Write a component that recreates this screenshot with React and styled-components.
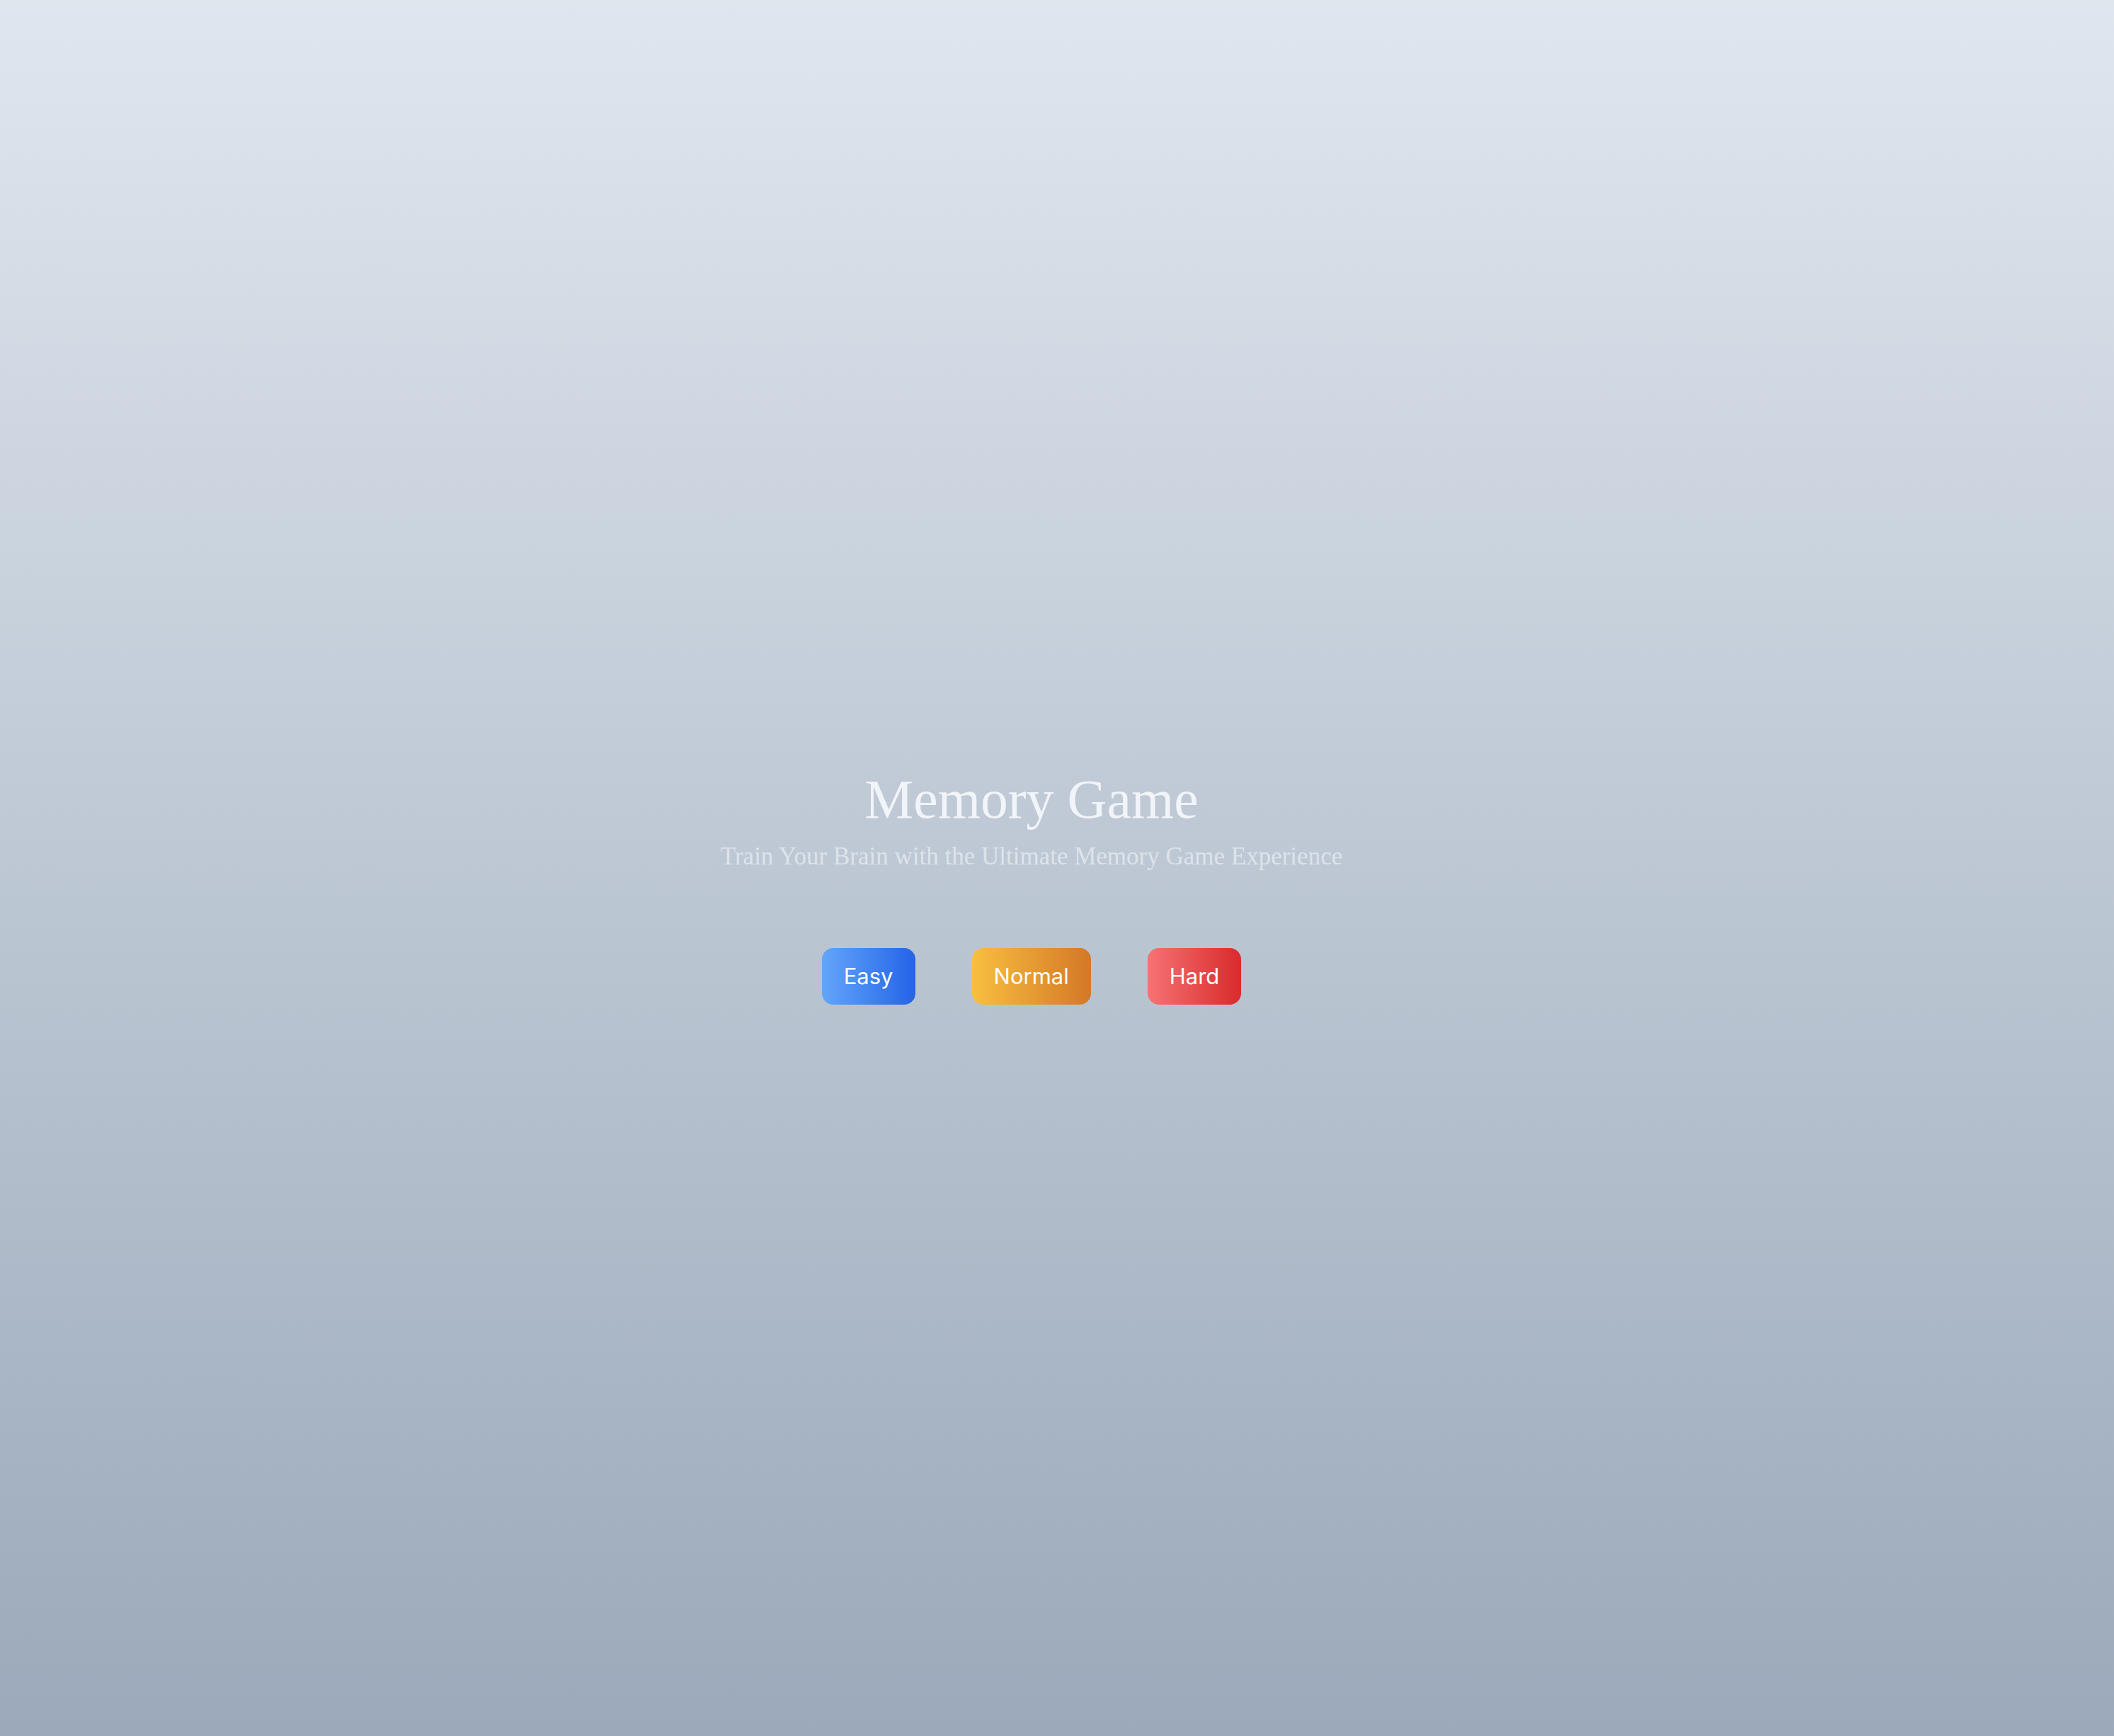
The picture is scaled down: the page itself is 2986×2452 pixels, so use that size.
import React from "react";
import styled, { createGlobalStyle } from "styled-components";

const GlobalStyle = createGlobalStyle`
  html, body {
    margin: 0;
    padding: 0;
  }
  body {
    font-family: "Liberation Serif", serif;
  }
`;

const Page = styled.main`
  min-height: 100vh;
  box-sizing: border-box;
  padding-right: 72px;
  display: flex;
  align-items: center;
  justify-content: center;
  background: linear-gradient(to bottom, #dfe6ee 0%, #9ba9ba 100%);
`;

const Hero = styled.section`
  display: flex;
  flex-direction: column;
  align-items: center;
  margin-top: 58px;
`;

const Title = styled.h1`
  margin: 0;
  font-family: "Liberation Serif", serif;
  font-weight: 400;
  font-size: 77.5px;
  line-height: 76px;
  color: #f1f4f8;
`;

const Subtitle = styled.p`
  margin: 26px 0 0;
  font-family: "Liberation Serif", serif;
  font-size: 35px;
  line-height: 34px;
  color: #dde3eb;
`;

const Levels = styled.div`
  display: flex;
  gap: 80px;
  margin-top: 112px;
`;

const gradients = {
  easy: "linear-gradient(to right, #62a6fa, #2563e8)",
  normal: "linear-gradient(to right, #f8bf40, #d47826)",
  hard: "linear-gradient(to right, #f67274, #d92b2c)",
};

const LevelButton = styled.button`
  height: 80px;
  padding: 0 31px;
  border: none;
  border-radius: 16px;
  background: ${(p) => gradients[p.$level]};
  color: #ffffff;
  font-family: Inter, "Liberation Sans", sans-serif;
  font-size: 31px;
  font-weight: 400;
  line-height: 32px;
  cursor: pointer;
`;

export default function App() {
  return (
    <>
      <GlobalStyle />
      <Page>
        <Hero>
          <Title>Memory Game</Title>
          <Subtitle>Train Your Brain with the Ultimate Memory Game Experience</Subtitle>
          <Levels>
            <LevelButton $level="easy">Easy</LevelButton>
            <LevelButton $level="normal">Normal</LevelButton>
            <LevelButton $level="hard">Hard</LevelButton>
          </Levels>
        </Hero>
      </Page>
    </>
  );
}
